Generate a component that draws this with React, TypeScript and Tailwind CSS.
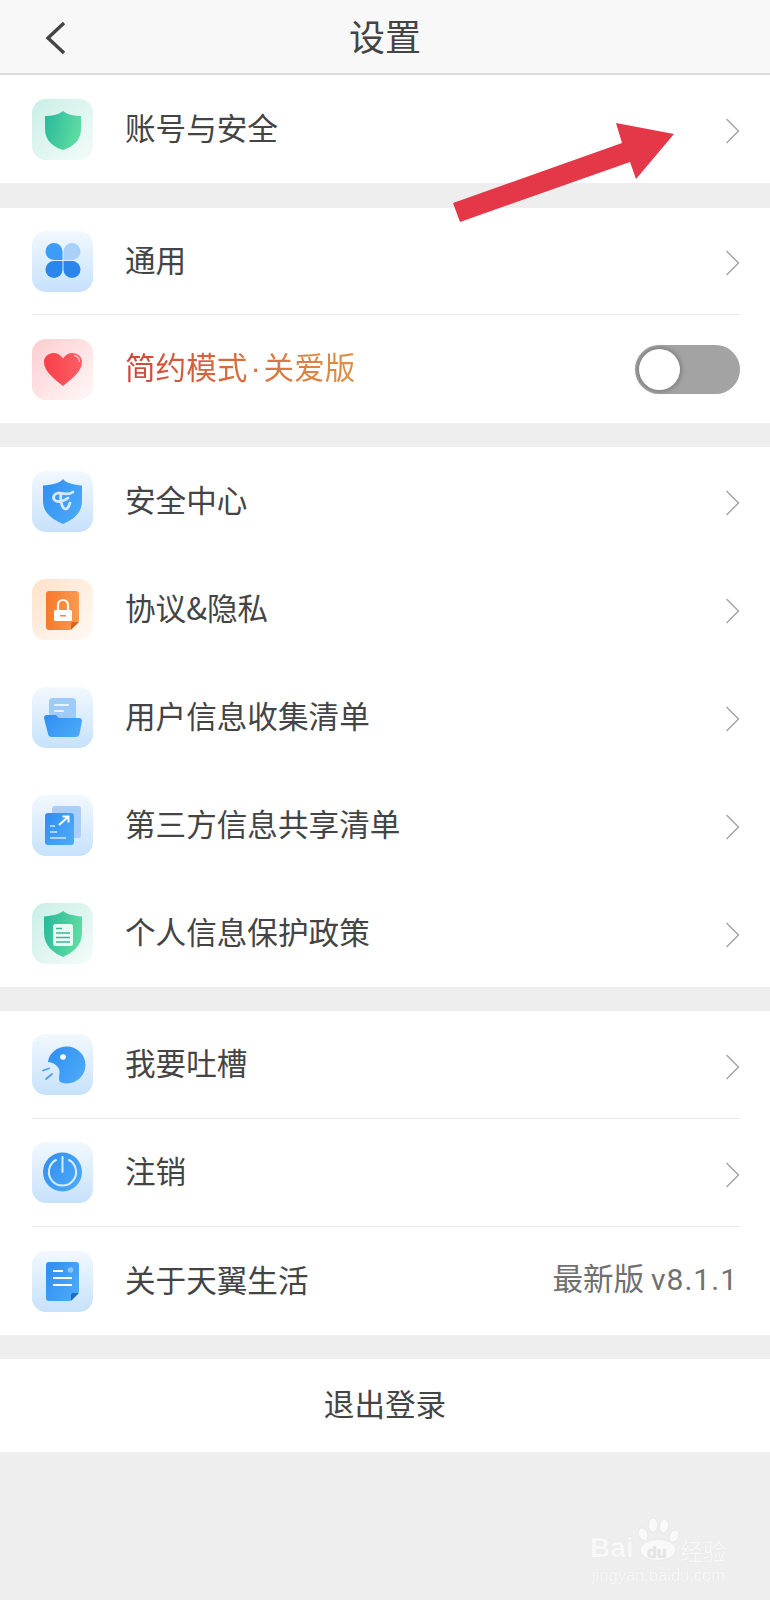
import type { ReactNode } from "react";

const font = "font-['Noto_Sans_CJK_SC','Noto_Sans',sans-serif]";

function Chevron() {
  return (
    <svg width="15" height="26" viewBox="0 0 15 26" fill="none" className="shrink-0 mt-[4px]">
      <path d="M1.5 1 L13.5 13 L1.5 25" stroke="#a6a6a6" strokeWidth="1.5" />
    </svg>
  );
}

function Tile({ tone, children }: { tone: string; children: ReactNode }) {
  return (
    <div className={`w-[61px] h-[61px] shrink-0 rounded-[14px] ${tone}`}>
      <svg width="61" height="61" viewBox="0 0 61 61" fill="none">
        <defs>
          <linearGradient id="blue" x1="0" y1="0" x2="1" y2="0.6">
            <stop offset="0" stopColor="#2f8ef0" />
            <stop offset="1" stopColor="#4aa8f8" />
          </linearGradient>
          <linearGradient id="green" x1="0" y1="0" x2="1" y2="0.3">
            <stop offset="0" stopColor="#26b89b" />
            <stop offset="1" stopColor="#5edba2" />
          </linearGradient>
          <linearGradient id="orange" x1="0" y1="0" x2="1" y2="0">
            <stop offset="0" stopColor="#f6792c" />
            <stop offset="1" stopColor="#fd9a4d" />
          </linearGradient>
          <linearGradient id="red" x1="0" y1="0" x2="1" y2="0">
            <stop offset="0" stopColor="#f93f48" />
            <stop offset="1" stopColor="#fb5f66" />
          </linearGradient>
        </defs>
        {children}
      </svg>
    </div>
  );
}

const blueTile = "bg-gradient-to-b from-[#f2f8fe] to-[#c6e2fb]";
const tealTile = "bg-gradient-to-br from-[#c9efe6] to-[#f4fcfa]";

function Row({
  icon,
  label,
  divider,
  right,
  height = "h-[108px]",
  labelClass = "text-[#444444]",
}: {
  icon: ReactNode;
  label: ReactNode;
  divider?: boolean;
  right?: ReactNode;
  height?: string;
  labelClass?: string;
}) {
  return (
    <div className="pl-[32px] pr-[30px]">
      <div className={`${height} flex items-center ${divider ? "border-b border-[#e9e9e9]" : ""}`}>
        {icon}
        <div className="ml-[32px] flex-1 text-[30.6px] leading-none mb-[4px]">
          <span className={labelClass}>{label}</span>
        </div>
        {right ?? <Chevron />}
      </div>
    </div>
  );
}

function Toggle() {
  return (
    <div className="w-[105px] h-[49px] rounded-full bg-[#a3a3a3] flex items-center pl-[4px]">
      <div className="w-[41px] h-[41px] rounded-full bg-white shadow-[0_0_4px_2px_rgba(0,0,0,0.22)]" />
    </div>
  );
}

export default function App() {
  return (
    <div className={`relative min-h-[1600px] bg-[#eeeeee] ${font}`}>
      <header className="relative h-[75px] bg-[#f8f8f8] border-b-2 border-[#dcdcdc] flex items-center justify-center">
        <svg width="22" height="34" viewBox="0 0 22 34" fill="none" className="absolute left-[45px] top-[21px]">
          <path d="M19 2 L3 17 L19 32" stroke="#444444" strokeWidth="3.4" />
        </svg>
        <span className="text-[36px] leading-none text-[#444444] mb-[4px]">设置</span>
      </header>

      <section className="bg-white">
        <Row
          label="账号与安全"
          icon={
            <Tile tone={tealTile}>
              <path d="M31 12 C34 15 42 17 49 17 V30 C49 42 40 48 31 51 C22 48 13 42 13 30 V17 C20 17 28 15 31 12Z" fill="url(#green)" />
            </Tile>
          }
        />
      </section>

      <section className="bg-white mt-[25px]">
        <Row
          divider
          height="h-[107px]"
          label="通用"
          icon={
            <Tile tone={blueTile}>
              <path d="M30.5 29 H22 A8.5 8.5 0 1 1 30.5 20.5 Z" fill="#3d9cf5" />
              <path d="M31.5 29 H40 A8.5 8.5 0 1 0 31.5 20.5 Z" fill="#a8d0f9" />
              <path d="M30.5 30 H22 A8.5 8.5 0 1 0 30.5 38.5 Z" fill="#2b86ec" />
              <path d="M31.5 30 H40 A8.5 8.5 0 1 1 31.5 38.5 Z" fill="#2b86ec" />
            </Tile>
          }
        />
        <Row
          label={
            <>
              简约模式<span className="font-['Liberation_Sans',sans-serif] px-[3px]">·</span>关爱版
            </>
          }
          labelClass="bg-gradient-to-r from-[#d1443a] to-[#dc9145] bg-clip-text text-transparent"
          right={<Toggle />}
          icon={
            <Tile tone="bg-gradient-to-br from-[#fdcdd0] to-[#fff8f8]">
              <path d="M31 47 C24 41 12 33 12 23 C12 17.5 16.5 14 21.5 14 C25.5 14 29 16 31 19.5 C33 16 36.5 14 40.5 14 C45.5 14 50 17.5 50 23 C50 33 38 41 31 47Z" fill="url(#red)" />
              <path d="M42 16.5 C45.5 17 47.5 19.5 47.5 23" stroke="#ffb9bc" strokeWidth="1.3" />
            </Tile>
          }
        />
      </section>

      <section className="bg-white mt-[24px]">
        <Row
          label="安全中心"
          icon={
            <Tile tone={blueTile}>
              <path d="M31 8 C34 12 42 14 50 14.5 V30 C50 43 40 49 31 53 C22 49 11 43 11 30 V14.5 C20 14 28 12 31 8Z" fill="url(#blue)" />
              <path d="M41 21 C36 25 30 22 26 22 C21 23 20 28 24 30 C27 31 32 30 36 27" stroke="#d5e9fc" strokeWidth="2.8" strokeLinecap="round" />
              <path d="M29 23 C28 30 30 38 34 38 C36 38 37 35 38 32" stroke="#d5e9fc" strokeWidth="2.8" strokeLinecap="round" />
            </Tile>
          }
        />
        <Row
          label="协议&隐私"
          icon={
            <Tile tone="bg-gradient-to-br from-[#fde2cb] to-[#fffaf5]">
              <path d="M17 12 H44 A3 3 0 0 1 47 15 V42 L38 51 H17 A3 3 0 0 1 14 48 V15 A3 3 0 0 1 17 12Z" fill="url(#orange)" />
              <path d="M39 51 L47 43 H41 A2 2 0 0 0 39 45Z" fill="#d9641f" />
              <path d="M26 31 V26 A5 5 0 0 1 36 26 V31" stroke="#ffffff" strokeWidth="2.2" />
              <rect x="22" y="31" width="18" height="11" rx="1.5" fill="#ffffff" />
              <rect x="28" y="36" width="6" height="1.5" fill="#f6892f" />
            </Tile>
          }
        />
        <Row
          label="用户信息收集清单"
          icon={
            <Tile tone={blueTile}>
              <rect x="17" y="11" width="27" height="28" rx="4" fill="#9fcbf8" />
              <rect x="22" y="17" width="15" height="2" rx="1" fill="#e6f2fe" />
              <rect x="22" y="23" width="10" height="2" rx="1" fill="#e6f2fe" />
              <path d="M15 28 H24 L27 31 H47 A3 3 0 0 1 50 34 L47.5 47 A4 4 0 0 1 43.5 50 H20 A4 4 0 0 1 16 47 L12 31 A3 3 0 0 1 15 28Z" fill="url(#blue)" />
            </Tile>
          }
        />
        <Row
          label="第三方信息共享清单"
          icon={
            <Tile tone={blueTile}>
              <rect x="20" y="11" width="29" height="32" rx="3" fill="#a9cff7" />
              <rect x="13" y="18" width="29" height="32" rx="3" fill="url(#blue)" />
              <path d="M27 30 L36 22 M30.5 21.5 H36.5 V27.5" stroke="#ffffff" strokeWidth="2" />
              <path d="M18 31 H23 M18 37 H25 M18 43 H34" stroke="#cfe6fc" strokeWidth="1.6" />
            </Tile>
          }
        />
        <Row
          label="个人信息保护政策"
          icon={
            <Tile tone={tealTile}>
              <path d="M31 8 C34 11 42 13 50 13.5 V30 C50 43 40 50 31 54 C22 50 12 43 12 30 V13.5 C20 13 28 11 31 8Z" fill="url(#green)" />
              <rect x="21" y="21" width="20" height="22" rx="2.5" fill="#eafaf5" />
              <path d="M24 25.5 H30 M24 30 H38 M24 34.5 H38 M24 39 H38" stroke="#3cb898" strokeWidth="1.3" />
            </Tile>
          }
        />
      </section>

      <section className="bg-white mt-[24px]">
        <Row
          divider
          label="我要吐槽"
          icon={
            <Tile tone={blueTile}>
              <path d="M35 12.5 A18.5 18.5 0 1 1 35 49.5 C31 49.5 28 48.5 27.5 47 C26 43 29 38 26.5 34 C24 30 20 28 16 28 C17 19 25 12.5 35 12.5Z" fill="url(#blue)" />
              <circle cx="31" cy="23" r="2.8" fill="#ffffff" />
              <path d="M11 36.5 L17 34.5 M14 45 L20 40" stroke="#4ba0ea" strokeWidth="1.8" strokeLinecap="round" />
            </Tile>
          }
        />
        <Row
          divider
          label="注销"
          icon={
            <Tile tone={blueTile}>
              <circle cx="30.5" cy="30" r="19.5" fill="url(#blue)" />
              <path d="M24 18 A13.6 13.6 0 1 0 37 18" stroke="#d8ecfe" strokeWidth="2" strokeLinecap="round" />
              <path d="M30.5 15 V30" stroke="#d8ecfe" strokeWidth="2" strokeLinecap="round" />
            </Tile>
          }
        />
        <Row
          label="关于天翼生活"
          right={
            <span className="mb-[5px] mr-[2px] text-[30.6px] leading-none text-[#707070]">
              最新版 <span className="font-['Roboto',sans-serif] text-[30px] tracking-[1px]">v8.1.1</span>
            </span>
          }
          icon={
            <Tile tone={blueTile}>
              <path d="M17 11 H44 A3 3 0 0 1 47 14 V41 L38 50 H17 A3 3 0 0 1 14 47 V14 A3 3 0 0 1 17 11Z" fill="url(#blue)" />
              <path d="M39 50 L47 42 H41 A2 2 0 0 0 39 44Z" fill="#1c6ec4" />
              <path d="M21 20 H31 M21 27 H40 M21 34 H40" stroke="#ffffff" strokeWidth="1.8" />
              <circle cx="38.5" cy="19" r="2.8" fill="#8cc3f7" />
            </Tile>
          }
        />
      </section>

      <section className="bg-white mt-[24px] h-[93px] flex items-center justify-center">
        <span className="text-[30.6px] leading-none text-[#444444] mb-[4px]">退出登录</span>
      </section>

      <svg
        width="230"
        height="105"
        viewBox="0 0 230 105"
        fill="none"
        className="absolute left-[445px] top-[120px]"
      >
        <polygon points="8,83 15,102 185,42 191,59 229,14 171,3 177,23" fill="#e43747" />
      </svg>

      <div className="absolute left-[590px] top-[1515px] w-[140px] h-[70px] text-[#f8f8f8] [text-shadow:0_0_1px_#dddddd]">
        <svg width="50" height="50" viewBox="0 0 50 50" className="absolute left-[45px] top-0" fill="#f9f9f9" stroke="#e2e2e2" strokeWidth="0.6">
          <ellipse cx="8" cy="19" rx="4.5" ry="6.5" transform="rotate(-25 8 19)" />
          <ellipse cx="18" cy="10" rx="4.5" ry="7" />
          <ellipse cx="29" cy="11" rx="4.5" ry="7" transform="rotate(8 29 11)" />
          <ellipse cx="39" cy="21" rx="4.5" ry="6.5" transform="rotate(25 39 21)" />
          <ellipse cx="23" cy="35" rx="18" ry="10.5" />
        </svg>
        <span className="absolute left-0 top-[19px] text-[28px] leading-none font-['Liberation_Sans',sans-serif] font-bold">Bai</span>
        <span className="absolute left-[57px] top-[29.5px] text-[16px] leading-none font-['Liberation_Sans',sans-serif] font-bold text-[#e4e4e4]">du</span>
        <span className="absolute left-[90px] top-[24px] text-[23px] leading-none">经验</span>
        <span className="absolute left-[2px] top-[52px] text-[16.5px] leading-none font-['Liberation_Sans',sans-serif]">jingyan.baidu.com</span>
      </div>
    </div>
  );
}
